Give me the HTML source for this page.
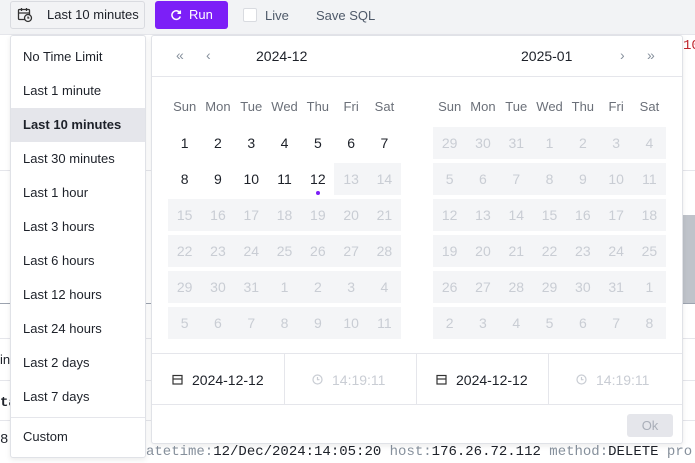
<!DOCTYPE html>
<html><head><meta charset="utf-8"><style>
*{box-sizing:border-box;margin:0;padding:0}
body{width:695px;height:463px;overflow:hidden;background:#fff;font-family:"Liberation Sans","DejaVu Sans",sans-serif;font-size:13px;color:#1d2129;position:relative}
.top{position:absolute;left:0;top:0;width:695px;height:35px;background:#f2f3f5;border-bottom:1px solid #e5e6eb}
.abs{position:absolute}
.btn1{left:10px;top:1px;width:135px;height:28px;border:1px solid #d9dbe0;border-radius:3px;background:#f2f3f5;padding-left:36px;line-height:26px;color:#1d2129}
.run{left:155px;top:1px;width:73px;height:28px;border-radius:3px;background:#7c1ff7;color:#fff;line-height:28px;padding-left:34px}
.dd{left:10px;top:35px;width:136px;height:423px;background:#fff;border:1px solid #e0e2e7;border-radius:3px;box-shadow:0 2px 6px rgba(0,0,0,.08)}
.dd div{height:34px;line-height:34px;padding-left:12px}
.panel{left:151px;top:35px;width:532px;height:409px;background:#fff;border:1px solid #e0e2e7;border-radius:3px;box-shadow:0 2px 6px rgba(0,0,0,.08)}
.hd{position:absolute;top:0;left:0;right:0;height:41px;border-bottom:1px solid #e5e6eb}
.g{position:absolute;display:grid;grid-template-columns:repeat(7,33.3px);grid-auto-rows:32px;row-gap:4px}
.g span{text-align:center;line-height:32px;font-size:14px}
.g .w{font-size:13px;color:#6b7079}
.g .d{background:#f4f5f7;color:#c9cdd4}
.mono{font-family:"Liberation Mono","DejaVu Sans Mono",monospace;font-size:14px}
</style></head><body>
<div class="top"></div>
<!-- background remnants -->
<div class="abs" style="left:0;top:170px;width:695px;height:1px;background:#e5e6eb"></div>
<div class="abs" style="left:683px;top:215px;width:12px;height:88px;background:#bfc3ca"></div>
<div class="abs" style="left:0;top:303px;width:695px;height:1px;background:#9ca3af"></div>
<div class="abs" style="left:0;top:338px;width:695px;height:1px;background:#e5e6eb"></div>
<div class="abs" style="left:0;top:380px;width:695px;height:1px;background:#e5e6eb"></div>
<div class="abs" style="left:0;top:420px;width:695px;height:1px;background:#e5e6eb"></div>
<div class="btn1 abs">Last 10 minutes</div>
<svg class="abs" style="left:17px;top:7px" width="16" height="16" viewBox="0 0 16 16" fill="none" stroke="#333" stroke-width="1.3"><rect x="1.5" y="2.5" width="11" height="10" rx="1"/><path d="M1.5 6h11M4.5 1v3M9.5 1v3"/><circle cx="11" cy="11" r="3.5" fill="#f2f3f5"/><path d="M11 9.5V11h1.3"/></svg>
<div class="abs run">Run</div>
<svg class="abs" style="left:170px;top:9px" width="12" height="12" viewBox="0 0 12 12" fill="none" stroke="#fff" stroke-width="1.5"><path d="M10 4A4.3 4.3 0 1 0 10.3 7.5"/><path d="M10.3 1.5V4.3H7.5"/></svg>
<div class="abs" style="left:243px;top:8px;width:14px;height:14px;border:1px solid #d9dbe0;background:#fff;border-radius:2px"></div>
<div class="abs" style="left:265px;top:8px;color:#4e5969">Live</div>
<div class="abs" style="left:316px;top:8px;color:#4e5969">Save SQL</div>
<div class="abs mono" style="left:683px;top:38px;color:#c0262d;background:#fff">10</div>
<div class="abs" style="left:0;top:352px;background:#fff">in</div>
<div class="abs mono" style="left:0;top:395px;font-weight:bold;background:#fff">ta</div>
<div class="abs mono" style="left:0;top:432px;background:#fff">8</div>
<div class="abs mono" style="left:146px;top:444px;white-space:nowrap;color:#86909c">atetime:<span style="color:#1d2129">12/Dec/2024:14:05:20</span> host:<span style="color:#1d2129">176.26.72.112</span> method:<span style="color:#1d2129">DELETE</span> pro</div>

<div class="abs dd">
<div style="margin-top:4px">No Time Limit</div><div>Last 1 minute</div><div style="background:#e5e6eb;font-weight:bold">Last 10 minutes</div><div>Last 30 minutes</div><div>Last 1 hour</div><div>Last 3 hours</div><div>Last 6 hours</div><div>Last 12 hours</div><div>Last 24 hours</div><div>Last 2 days</div><div>Last 7 days</div>
<div style="border-top:1px solid #e5e6eb;margin-top:3px;line-height:38px">Custom</div>
</div>

<div class="abs panel">
<div class="hd">
<span class="abs" style="left:24px;top:11px;color:#86909c;font-size:14px">«</span>
<span class="abs" style="left:54px;top:11px;color:#86909c;font-size:14px">‹</span>
<span class="abs" style="left:104px;top:12px;font-size:14px">2024-12</span>
<span class="abs" style="left:369px;top:12px;font-size:14px">2025-01</span>
<span class="abs" style="left:468px;top:11px;color:#86909c;font-size:14px">›</span>
<span class="abs" style="left:495px;top:11px;color:#86909c;font-size:14px">»</span>
</div>
<div class="g" style="left:16px;top:55px">
<span class="w">Sun</span><span class="w">Mon</span><span class="w">Tue</span><span class="w">Wed</span><span class="w">Thu</span><span class="w">Fri</span><span class="w">Sat</span>
<span>1</span><span>2</span><span>3</span><span>4</span><span>5</span><span>6</span><span>7</span>
<span>8</span><span>9</span><span>10</span><span>11</span><span style="position:relative">12<i style="position:absolute;left:15px;top:28px;width:4px;height:4px;border-radius:2px;background:#7c1ff7"></i></span><span class="d">13</span><span class="d">14</span>
<span class="d">15</span><span class="d">16</span><span class="d">17</span><span class="d">18</span><span class="d">19</span><span class="d">20</span><span class="d">21</span>
<span class="d">22</span><span class="d">23</span><span class="d">24</span><span class="d">25</span><span class="d">26</span><span class="d">27</span><span class="d">28</span>
<span class="d">29</span><span class="d">30</span><span class="d">31</span><span class="d">1</span><span class="d">2</span><span class="d">3</span><span class="d">4</span>
<span class="d">5</span><span class="d">6</span><span class="d">7</span><span class="d">8</span><span class="d">9</span><span class="d">10</span><span class="d">11</span>
</div>
<div class="g" style="left:281px;top:55px">
<span class="w">Sun</span><span class="w">Mon</span><span class="w">Tue</span><span class="w">Wed</span><span class="w">Thu</span><span class="w">Fri</span><span class="w">Sat</span>
<span class="d">29</span><span class="d">30</span><span class="d">31</span><span class="d">1</span><span class="d">2</span><span class="d">3</span><span class="d">4</span>
<span class="d">5</span><span class="d">6</span><span class="d">7</span><span class="d">8</span><span class="d">9</span><span class="d">10</span><span class="d">11</span>
<span class="d">12</span><span class="d">13</span><span class="d">14</span><span class="d">15</span><span class="d">16</span><span class="d">17</span><span class="d">18</span>
<span class="d">19</span><span class="d">20</span><span class="d">21</span><span class="d">22</span><span class="d">23</span><span class="d">24</span><span class="d">25</span>
<span class="d">26</span><span class="d">27</span><span class="d">28</span><span class="d">29</span><span class="d">30</span><span class="d">31</span><span class="d">1</span>
<span class="d">2</span><span class="d">3</span><span class="d">4</span><span class="d">5</span><span class="d">6</span><span class="d">7</span><span class="d">8</span>
</div>
<div class="abs" style="left:0;right:0;top:317px;height:52px;border-top:1px solid #e5e6eb;border-bottom:1px solid #e5e6eb"></div>
<div class="abs" style="left:132px;top:317px;width:1px;height:51px;background:#e5e6eb"></div>
<div class="abs" style="left:264px;top:317px;width:1px;height:51px;background:#e5e6eb"></div>
<div class="abs" style="left:396px;top:317px;width:1px;height:51px;background:#e5e6eb"></div>
<svg class="abs" style="left:20px;top:338px" width="11" height="11" viewBox="0 0 11 11" fill="none" stroke="#333" stroke-width="1.2"><rect x="1" y="1.5" width="9" height="8.5"/><path d="M1 5h9"/></svg>
<span class="abs" style="left:40px;top:336px;font-size:14px">2024-12-12</span>
<svg class="abs" style="left:160px;top:338px" width="11" height="11" viewBox="0 0 11 11" fill="none" stroke="#c9cdd4" stroke-width="1.2"><circle cx="5.5" cy="5.5" r="4.5"/><path d="M5.5 3v2.7h2"/></svg>
<span class="abs" style="left:180px;top:336px;font-size:14px;color:#c9cdd4">14:19:11</span>
<svg class="abs" style="left:284px;top:338px" width="11" height="11" viewBox="0 0 11 11" fill="none" stroke="#333" stroke-width="1.2"><rect x="1" y="1.5" width="9" height="8.5"/><path d="M1 5h9"/></svg>
<span class="abs" style="left:304px;top:336px;font-size:14px">2024-12-12</span>
<svg class="abs" style="left:424px;top:338px" width="11" height="11" viewBox="0 0 11 11" fill="none" stroke="#c9cdd4" stroke-width="1.2"><circle cx="5.5" cy="5.5" r="4.5"/><path d="M5.5 3v2.7h2"/></svg>
<span class="abs" style="left:444px;top:336px;font-size:14px;color:#c9cdd4">14:19:11</span>
<div class="abs" style="left:475px;top:378px;width:46px;height:23px;background:#e5e6eb;border-radius:3px;color:#a9aeb8;text-align:center;line-height:23px">Ok</div>
</div>
</body></html>
